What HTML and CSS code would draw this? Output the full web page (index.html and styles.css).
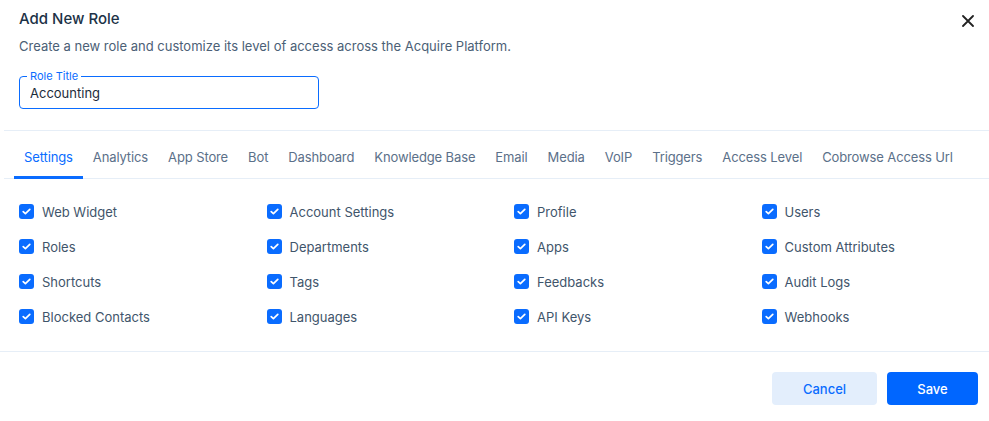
FILE: index.html
```html
<!DOCTYPE html>
<html lang="en">
<head>
  <meta charset="UTF-8">
  <meta name="viewport" content="width=device-width, initial-scale=1.0">
  <title>Add New Role</title>
  <link rel="stylesheet" href="styles.css">
</head>
<body>
  <div class="modal">
    <div class="head">
      <div class="head-top">
        <div class="title">Add New Role</div>
        <a class="close" href="javascript:;">
          <svg width="12" height="12" viewBox="0 0 12 12"><path d="M1 1L11 11M11 1L1 11" stroke="#222" stroke-width="1.8" stroke-linecap="round"/></svg>
        </a>
      </div>
      <div class="subtitle">Create a new role and customize its level of access across the Acquire Platform.</div>
      <div class="field">
        <label class="field-label">Role Title</label>
        <input class="field-input" type="text" value="Accounting">
      </div>
    </div>

    <div class="tabs">
      <a class="tab active">Settings</a>
      <a class="tab">Analytics</a>
      <a class="tab">App Store</a>
      <a class="tab">Bot</a>
      <a class="tab">Dashboard</a>
      <a class="tab">Knowledge Base</a>
      <a class="tab">Email</a>
      <a class="tab">Media</a>
      <a class="tab">VoIP</a>
      <a class="tab">Triggers</a>
      <a class="tab">Access Level</a>
      <a class="tab">Cobrowse Access Url</a>
    </div>

    <div class="perms"></div>

    <div class="foot">
      <button class="btn btn-cancel">Cancel</button>
      <button class="btn btn-save">Save</button>
    </div>
  </div>
  <script>
    const perms = [
      'Web Widget', 'Account Settings', 'Profile', 'Users',
      'Roles', 'Departments', 'Apps', 'Custom Attributes',
      'Shortcuts', 'Tags', 'Feedbacks', 'Audit Logs',
      'Blocked Contacts', 'Languages', 'API Keys', 'Webhooks'
    ]
    const check = '<svg width="15" height="15" viewBox="0 0 15 15"><rect width="15" height="15" rx="3" fill="#0a6cff"/><path d="M4.2 7.6L6.4 9.7L10.8 5.3" stroke="#fff" stroke-width="1.7" fill="none" stroke-linecap="round" stroke-linejoin="round"/></svg>'
    let wrap = document.querySelector('.perms')
    perms.forEach(name => {
      let item = document.createElement('label')
      item.className = 'perm'
      item.innerHTML = '<span class="box">' + check + '</span><span>' + name + '</span>'
      wrap.appendChild(item)
    })
  </script>
</body>
</html>
```

FILE: styles.css
```css
* {
  margin: 0;
  padding: 0;
  box-sizing: border-box;
}
html,
body {
  width: 100%;
  height: 100%;
  background: #ffffff;
  font-family: Inter, 'Noto Sans', sans-serif;
  font-size: 13px;
  color: #3f556b;
}
.modal {
  width: 989px;
}
.head {
  padding: 9px 19px 21px;
}
.head-top {
  display: flex;
  justify-content: space-between;
  align-items: center;
}
.title {
  font-size: 15px;
  font-weight: 500;
  line-height: 20px;
  color: #1c3247;
}
.close {
  display: flex;
  margin: 3px -4px 0 0;
}
.subtitle {
  margin-top: 7px;
  line-height: 20px;
  color: #4b6076;
}
.field {
  position: relative;
  width: 300px;
  margin-top: 20px;
}
.field-label {
  position: absolute;
  top: -7px;
  left: 8px;
  padding: 0 3px;
  background: #ffffff;
  font-size: 11px;
  line-height: 14px;
  color: #0a6cff;
}
.field-input {
  display: block;
  width: 100%;
  height: 33px;
  padding: 0 10px;
  border: 1px solid #0a6cff;
  border-radius: 4px;
  font-family: inherit;
  font-size: 13px;
  color: #1c2b3a;
  outline: none;
}
.tabs {
  display: flex;
  margin-left: 4px;
  padding-left: 10px;
  border-top: 1px solid #e6eef7;
  border-bottom: 1px solid #e6eef7;
}
.tab {
  padding: 16px 10px 9px;
  line-height: 20px;
  letter-spacing: -0.12px;
  border-bottom: 3px solid transparent;
  color: #5b7089;
  cursor: pointer;
  margin-bottom: -1px;
}
.tab.active {
  color: #0a6cff;
  border-bottom-color: #0a6cff;
  border-radius: 2px 2px 0 0;
}
.perms {
  display: grid;
  grid-template-columns: repeat(4, 247.5px);
  grid-auto-rows: 35px;
  padding: 15px 0 17px 19px;
  border-bottom: 1px solid #e6eef7;
}
.perm {
  display: flex;
  align-items: center;
  gap: 8px;
  color: #3f556b;
}
.box {
  display: flex;
  width: 15px;
  height: 15px;
  margin-top: -1px;
}
.foot {
  display: flex;
  justify-content: flex-end;
  gap: 10px;
  padding: 20px 11px 0 0;
}
.btn {
  height: 33px;
  border: none;
  border-radius: 4px;
  font-family: inherit;
  font-size: 13px;
  font-weight: 500;
  cursor: pointer;
}
.btn-cancel {
  width: 105px;
  background: #e3eefc;
  color: #0a6cff;
}
.btn-save {
  width: 91px;
  background: #0066ff;
  color: #ffffff;
}
```
